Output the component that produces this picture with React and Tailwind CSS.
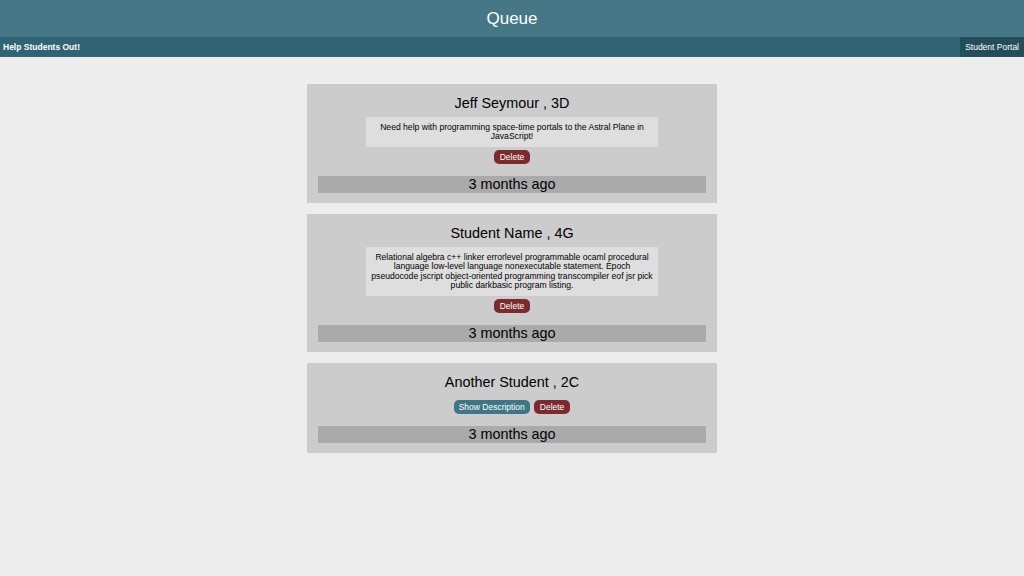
const students = [
  {
    name: "Jeff Seymour",
    room: "3D",
    desc: "Need help with programming space-time portals to the Astral Plane in JavaScript!",
    showDesc: true,
  },
  {
    name: "Student Name",
    room: "4G",
    desc: "Relational algebra c++ linker errorlevel programmable ocaml procedural language low-level language nonexecutable statement. Epoch pseudocode jscript object-oriented programming transcompiler eof jsr pick public darkbasic program listing.",
    showDesc: true,
  },
  {
    name: "Another Student",
    room: "2C",
    desc: "",
    showDesc: false,
  },
];

function Card({ s }) {
  return (
    <div className="w-[410px] bg-[#cccccc] pt-[10px] pb-[10px] px-[11px] flex flex-col items-center">
      <h2 className="text-[14.4px] leading-[19px] text-black mb-[4px]">
        {s.name} , {s.room}
      </h2>
      {s.showDesc && (
        <p className="w-[292px] bg-[#dedede] px-[4px] py-[5.5px] text-[8.6px] leading-[9.5px] text-center text-black">
          {s.desc}
        </p>
      )}
      <div className={s.showDesc ? "flex gap-[4px] mt-[3px]" : "flex gap-[4px] mt-[4px]"}>
        {!s.showDesc && (
          <button className="h-[14px] px-[5px] rounded-[5px] bg-[#3e7686] text-white text-[8.5px] leading-[14px]">
            Show Description
          </button>
        )}
        <button className="h-[14px] px-[6px] rounded-[5px] bg-[#7b2b2d] text-white text-[8.5px] leading-[14px]">
          Delete
        </button>
      </div>
      <div className="w-full h-[17px] mt-[12px] bg-[#aaaaaa] text-center text-[14.4px] leading-[17px] text-black">
        3 months ago
      </div>
    </div>
  );
}

export default function App() {
  return (
    <div className="min-h-[576px] bg-[#ededed] font-['Liberation_Sans',Arial,sans-serif]">
      {/* header */}
      <div className="h-[37px] bg-[#457787] flex items-center justify-center">
        <h1 className="text-white text-[17px] leading-[20px]">Queue</h1>
      </div>
      <div className="h-[20px] bg-[#306475] flex items-center justify-between">
        <span className="pl-[3px] text-white text-[8.5px] font-bold">Help Students Out!</span>
        <span className="h-full px-[5px] bg-[#234d5a] text-white text-[8.5px] flex items-center">
          Student Portal
        </span>
      </div>

      {/* queue */}
      <div className="flex flex-col items-center gap-[11px] pt-[27px]">
        {students.map((s, i) => (
          <Card key={i} s={s} />
        ))}
      </div>
    </div>
  );
}
